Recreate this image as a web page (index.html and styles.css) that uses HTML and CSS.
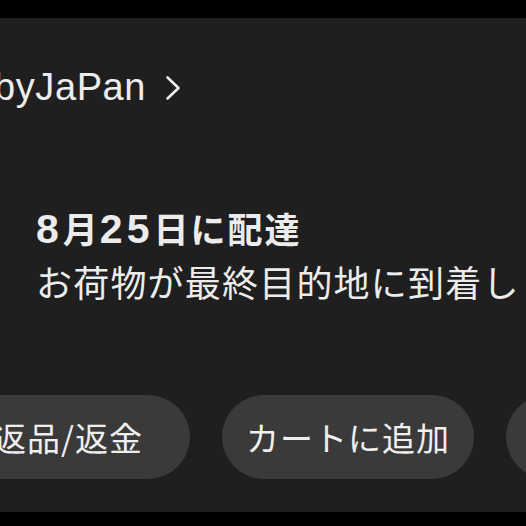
FILE: index.html
```html
<!DOCTYPE html>
<html lang="ja">
<head>
<meta charset="utf-8">
<title>注文詳細</title>
<link rel="stylesheet" href="styles.css">
</head>
<body>
<div class="screen">
  <section class="card">
    <div class="store">
      <span class="store-name">byJaPan</span>
      <svg class="chevron" width="16" height="26" viewBox="0 0 16 26" aria-hidden="true">
        <path d="M2.5 2.5 L13.5 13 L2.5 23.5" fill="none" stroke="#ececec" stroke-width="2.6" stroke-linecap="round" stroke-linejoin="round"/>
      </svg>
    </div>
    <div class="status">
      <div class="status-title"><span class="num">8</span>月<span class="num">25</span>日に配達</div>
      <div class="status-text">お荷物が最終目的地に到着しました</div>
    </div>
    <div class="actions">
      <div class="pill pill-first">返品/返金</div>
      <div class="pill">カートに追加</div>
      <div class="pill">商品レビュー</div>
    </div>
  </section>
</div>
</body>
</html>
```
FILE: styles.css
```css
html, body {
  margin: 0;
  padding: 0;
  background: #000;
}
.screen {
  width: 526px;
  height: 526px;
  padding-top: 18px;
  box-sizing: border-box;
  overflow: hidden;
}
.card {
  background: #1f1f1f;
  height: 494px;
  padding: 46px 0 0 36px;
  box-sizing: border-box;
  overflow: hidden;
  color: #ececec;
}
.store {
  display: flex;
  align-items: center;
  gap: 19px;
  margin-left: -42px;
  height: 46px;
}
.store-name {
  font-family: "Liberation Sans", Arial, sans-serif;
  font-size: 38px;
  line-height: 46px;
  letter-spacing: 0.6px;
}
.chevron {
  display: block;
  margin-top: 2px;
}
.status {
  margin-top: 96px;
  width: 484px;
}
.status-title {
  font-family: "Noto Sans CJK JP", sans-serif;
  font-weight: 700;
  font-size: 35px;
  line-height: 44px;
  height: 44px;
  letter-spacing: 2px;
  white-space: nowrap;
}
.num {
  font-family: "Liberation Sans", Arial, sans-serif;
  font-size: 41px;
  line-height: 30px;
  letter-spacing: 4px;
}
.status-text {
  font-family: "Noto Sans CJK JP", sans-serif;
  font-size: 36px;
  line-height: 48px;
  letter-spacing: 1.2px;
  margin-top: 7px;
  white-space: nowrap;
  overflow: hidden;
}
.actions {
  display: flex;
  gap: 32px;
  margin-top: 90px;
  margin-left: -76px;
}
.pill {
  flex: none;
  display: flex;
  align-items: center;
  justify-content: center;
  height: 84px;
  padding: 0 24px;
  border-radius: 42px;
  background: #3a3a3a;
  font-family: "Noto Sans CJK JP", sans-serif;
  font-size: 33px;
  letter-spacing: 1px;
  white-space: nowrap;
  color: #efefef;
}
.pill-first {
  width: 230px;
  box-sizing: border-box;
  justify-content: flex-end;
  padding-right: 47px;
}
```
